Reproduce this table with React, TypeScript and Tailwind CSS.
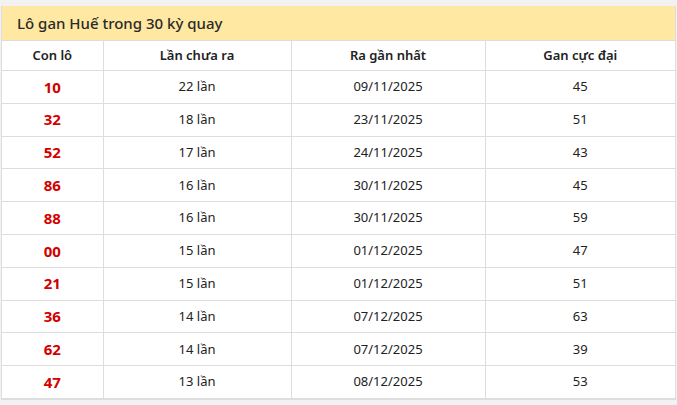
const rows = [
  { lo: '10', times: '22 lần', last: '09/11/2025', max: '45' },
  { lo: '32', times: '18 lần', last: '23/11/2025', max: '51' },
  { lo: '52', times: '17 lần', last: '24/11/2025', max: '43' },
  { lo: '86', times: '16 lần', last: '30/11/2025', max: '45' },
  { lo: '88', times: '16 lần', last: '30/11/2025', max: '59' },
  { lo: '00', times: '15 lần', last: '01/12/2025', max: '47' },
  { lo: '21', times: '15 lần', last: '01/12/2025', max: '51' },
  { lo: '36', times: '14 lần', last: '07/12/2025', max: '63' },
  { lo: '62', times: '14 lần', last: '07/12/2025', max: '39' },
  { lo: '47', times: '13 lần', last: '08/12/2025', max: '53' },
];

export default function App() {
  return (
    <div className="min-h-screen bg-[#f2f2f2] pt-[6px] pl-px pr-px" style={{ fontFamily: '"Noto Sans", "Open Sans", sans-serif' }}>
      <div className="w-[675px] border border-t-0 border-[#dddddd] bg-white">
        <div className="h-[34px] bg-[#ffe8a2] pl-[15px] flex items-center text-[15px] font-medium text-[#2a2a2a]">
          Lô gan Huế trong 30 kỳ quay
        </div>
        <table className="w-full border-collapse text-[13px] text-[#222]">
          <colgroup>
            <col className="w-[101px]" />
            <col className="w-[188px]" />
            <col className="w-[194px]" />
            <col />
          </colgroup>
          <thead>
            <tr className="h-[30px]">
              <th className="border border-[#dddddd] border-l-0 font-semibold">Con lô</th>
              <th className="border border-[#dddddd] font-semibold">Lần chưa ra</th>
              <th className="border border-[#dddddd] font-semibold">Ra gần nhất</th>
              <th className="border border-[#dddddd] border-r-0 font-semibold">Gan cực đại</th>
            </tr>
          </thead>
          <tbody>
            {rows.map(r => (
              <tr key={r.lo} className="h-[32.8px]">
                <td className="border border-[#dddddd] border-l-0 text-center text-[15px] font-bold text-[#d40000]">{r.lo}</td>
                <td className="border border-[#dddddd] text-center">{r.times}</td>
                <td className="border border-[#dddddd] text-center">{r.last}</td>
                <td className="border border-[#dddddd] border-r-0 text-center">{r.max}</td>
              </tr>
            ))}
          </tbody>
        </table>
      </div>
    </div>
  );
}
